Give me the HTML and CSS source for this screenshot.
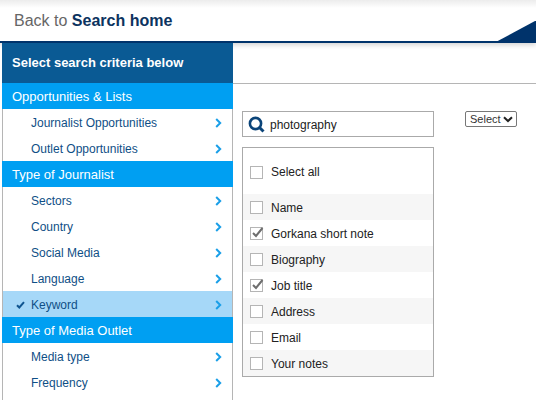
FILE: index.html
```html
<!DOCTYPE html>
<html lang="en">
<head>
<meta charset="utf-8">
<title>Search criteria</title>
<link rel="stylesheet" href="styles.css">
</head>
<body>
<header class="topbar">
  <div class="back">Back to <strong>Search home</strong></div>
  <svg class="corner" width="42" height="22" viewBox="0 0 42 22"><path d="M0 22 L41 0 H42 V22 Z" fill="#00336b"/></svg>
</header>
<div class="page">
  <nav class="side">
    <h2 class="side-title">Select search criteria below</h2>
    <h3 class="group">Opportunities &amp; Lists</h3>
    <a class="item"><span>Journalist Opportunities</span><svg class="chev" width="7" height="10" viewBox="0 0 7 10"><path d="M1.2 1 L5.2 5 L1.2 9" fill="none" stroke="#1a9fe8" stroke-width="2"/></svg></a>
    <a class="item"><span>Outlet Opportunities</span><svg class="chev" width="7" height="10" viewBox="0 0 7 10"><path d="M1.2 1 L5.2 5 L1.2 9" fill="none" stroke="#1a9fe8" stroke-width="2"/></svg></a>
    <h3 class="group">Type of Journalist</h3>
    <a class="item"><span>Sectors</span><svg class="chev" width="7" height="10" viewBox="0 0 7 10"><path d="M1.2 1 L5.2 5 L1.2 9" fill="none" stroke="#1a9fe8" stroke-width="2"/></svg></a>
    <a class="item"><span>Country</span><svg class="chev" width="7" height="10" viewBox="0 0 7 10"><path d="M1.2 1 L5.2 5 L1.2 9" fill="none" stroke="#1a9fe8" stroke-width="2"/></svg></a>
    <a class="item"><span>Social Media</span><svg class="chev" width="7" height="10" viewBox="0 0 7 10"><path d="M1.2 1 L5.2 5 L1.2 9" fill="none" stroke="#1a9fe8" stroke-width="2"/></svg></a>
    <a class="item"><span>Language</span><svg class="chev" width="7" height="10" viewBox="0 0 7 10"><path d="M1.2 1 L5.2 5 L1.2 9" fill="none" stroke="#1a9fe8" stroke-width="2"/></svg></a>
    <a class="item active"><svg class="tick" width="9" height="8" viewBox="0 0 9 8"><path d="M1 4.2 L3.3 6.5 L8 1.2" fill="none" stroke="#0f5590" stroke-width="2"/></svg><span>Keyword</span><svg class="chev" width="7" height="10" viewBox="0 0 7 10"><path d="M1.2 1 L5.2 5 L1.2 9" fill="none" stroke="#1a9fe8" stroke-width="2"/></svg></a>
    <h3 class="group">Type of Media Outlet</h3>
    <a class="item"><span>Media type</span><svg class="chev" width="7" height="10" viewBox="0 0 7 10"><path d="M1.2 1 L5.2 5 L1.2 9" fill="none" stroke="#1a9fe8" stroke-width="2"/></svg></a>
    <a class="item"><span>Frequency</span><svg class="chev" width="7" height="10" viewBox="0 0 7 10"><path d="M1.2 1 L5.2 5 L1.2 9" fill="none" stroke="#1a9fe8" stroke-width="2"/></svg></a>
  </nav>
  <main class="main">
    <div class="spacer"></div>
    <div class="content">
      <div class="column">
        <div class="search">
          <svg class="glass" width="17" height="17" viewBox="0 0 17 17"><circle cx="7.5" cy="7.5" r="5.6" fill="none" stroke="#0b4479" stroke-width="2.6"/><path d="M11.5 11.5 L15.5 15.5" stroke="#0b4479" stroke-width="3"/></svg>
          <span>photography</span>
        </div>
        <div class="list">
          <div class="row all"><span class="box"></span><span>Select all</span></div>
          <div class="row odd"><span class="box"></span><span>Name</span></div>
          <div class="row"><span class="box"><svg width="15" height="13" viewBox="0 0 15 13"><path d="M3 7 L6 10 L12.5 2" fill="none" stroke="#6e6e6e" stroke-width="2"/></svg></span><span>Gorkana short note</span></div>
          <div class="row odd"><span class="box"></span><span>Biography</span></div>
          <div class="row"><span class="box"><svg width="15" height="13" viewBox="0 0 15 13"><path d="M3 7 L6 10 L12.5 2" fill="none" stroke="#6e6e6e" stroke-width="2"/></svg></span><span>Job title</span></div>
          <div class="row odd"><span class="box"></span><span>Address</span></div>
          <div class="row"><span class="box"></span><span>Email</span></div>
          <div class="row odd"><span class="box"></span><span>Your notes</span></div>
        </div>
      </div>
      <div class="select">Select<svg width="10" height="7" viewBox="0 0 10 7"><path d="M1 1.2 L5 5 L9 1.2" fill="none" stroke="#222" stroke-width="2"/></svg></div>
    </div>
  </main>
</div>
</body>
</html>
```
FILE: styles.css
```css
* { box-sizing: border-box; }
html, body { margin: 0; padding: 0; }
body {
  width: 536px;
  height: 400px;
  overflow: hidden;
  background: #fff;
  font-family: "Liberation Sans", Arial, sans-serif;
}
.topbar {
  height: 43px;
  display: flex;
  justify-content: space-between;
  align-items: flex-end;
  border-bottom: 2px solid #00336b;
  background: linear-gradient(#ececec 0, #fff 8px);
  box-shadow: 0 2px 5px rgba(0,0,0,.18);
  position: relative;
}
.back {
  align-self: flex-start;
  padding: 11px 0 0 14px;
  font-size: 16px;
  line-height: 20px;
  color: #666;
}
.back strong { color: #0c3360; }
.corner { display: block; margin-bottom: -2px; }
.page { display: flex; height: 357px; padding-left: 2px; }
.side {
  width: 231px;
  flex: none;
  border-left: 1px solid #b5b5b5;
  border-right: 1px solid #b5b5b5;
  position: relative;
}
.side-title {
  margin: 0 -1px;
  height: 40px;
  padding: 0 0 0 10px;
  background: #0a5a94;
  color: #fff;
  font-size: 13px;
  line-height: 40px;
  font-weight: bold;
}
.group {
  margin: 0 -1px;
  height: 26px;
  padding: 1px 0 0 10px;
  background: #009ff2;
  color: #fff;
  font-size: 13px;
  line-height: 25px;
  font-weight: normal;
}
.item {
  height: 26px;
  display: flex;
  align-items: center;
  padding: 1px 10px 0 28px;
  font-size: 12px;
  color: #0f4f86;
  position: relative;
}
.item span { flex: 1; }
.item.active { background: #a6d8f8; }
.tick { position: absolute; left: 13px; top: 10px; }
.main { flex: 1; min-width: 0; }
.spacer { height: 41px; border-bottom: 1px solid #b5b5b5; }
.content { display: flex; align-items: flex-start; padding: 27px 0 0 9px; }
.column { width: 192px; flex: none; }
.search {
  height: 26px;
  border: 1px solid #aaa;
  display: flex;
  align-items: center;
  gap: 5px;
  padding: 1px 0 0 5px;
  font-size: 12px;
  color: #222;
}
.list {
  margin-top: 10px;
  height: 230px;
  border: 1px solid #aaa;
}
.row {
  height: 26px;
  display: flex;
  align-items: center;
  gap: 8px;
  padding: 1px 0 0 7px;
  font-size: 12px;
  color: #222;
}
.row.all { height: 46px; padding-top: 2px; }
.row.odd { background: #f6f6f6; }
.box {
  width: 13px;
  height: 13px;
  flex: none;
  border: 1px solid #b5b5b5;
  background: #fff;
  position: relative;
}
.box svg { position: absolute; left: -1px; top: -2px; }
.select {
  margin: 0 0 0 31px;
  width: 52px;
  height: 16px;
  border: 1px solid #777;
  border-radius: 2px;
  display: flex;
  align-items: center;
  justify-content: space-between;
  padding: 0 3px 0 4px;
  font-size: 11px;
  color: #333;
}
```
